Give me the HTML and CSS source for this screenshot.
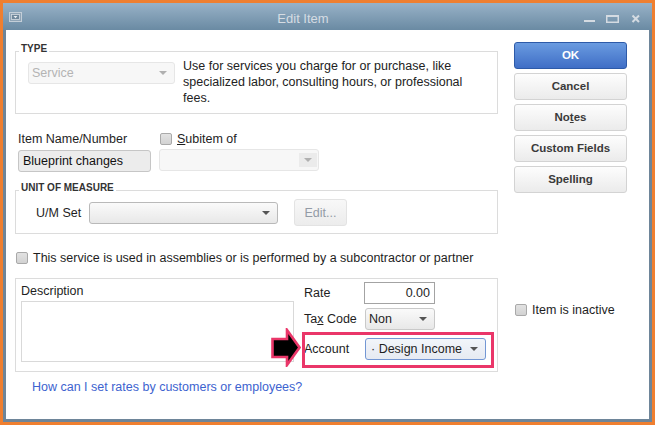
FILE: index.html
```html
<!DOCTYPE html>
<html>
<head>
<meta charset="utf-8">
<title>Edit Item</title>
<link rel="stylesheet" href="styles.css">
</head>
<body>
<div class="window">
  <div class="titlebar">
    <svg class="sysmenu" width="13" height="10" viewBox="0 0 13 10">
      <rect x="0.5" y="0.5" width="12" height="9" fill="#8fa4b6" stroke="#c3ced8"/>
      <rect x="2.5" y="2.5" width="8" height="5" fill="#6f879b" stroke="#d3dae1" stroke-width="0.8"/>
      <polygon points="4.5,4 8.5,4 6.5,6.2" fill="#e8edf1"/>
    </svg>
    <div class="title">Edit Item</div>
    <svg class="controls" width="56" height="27" viewBox="0 0 56 27">
      <rect x="0" y="17" width="11" height="2" fill="#d4dbe2"/>
      <rect x="22.75" y="12.75" width="11.5" height="6.5" fill="none" stroke="#d4dbe2" stroke-width="1.5"/>
      <rect x="22" y="12" width="13" height="2" fill="#d4dbe2"/>
      <path d="M48.5 12.5 L55 19 M55 12.5 L48.5 19" stroke="#d4dbe2" stroke-width="2"/>
    </svg>
  </div>
  <div class="client">
    <div class="main">
      <div class="group type-group">
        <div class="legend">TYPE</div>
        <div class="type-row">
          <div class="select disabled type-select"><span>Service</span><i class="arrow"></i></div>
          <p class="type-desc">Use for services you charge for or purchase, like specialized labor, consulting hours, or professional fees.</p>
        </div>
      </div>

      <div class="name-row">
        <div class="name-col">
          <div class="lbl">Item Name/Number</div>
          <div class="input name-input">Blueprint changes</div>
        </div>
        <div class="sub-col">
          <div class="check-line"><span class="checkbox"></span><span><u>S</u>ubitem of</span></div>
          <div class="select disabled sub-select"><span class="arrow-box"><i class="arrow"></i></span></div>
        </div>
      </div>

      <div class="group uom-group">
        <div class="legend">UNIT OF MEASURE</div>
        <div class="uom-row">
          <div class="uom-label">U/M Set</div>
          <div class="select uom-select"><i class="arrow"></i></div>
          <div class="edit-btn">Edit...</div>
        </div>
      </div>

      <div class="check-line assembly"><span class="checkbox"></span><span>This service is used in assemblies or is performed by a subcontractor or partner</span></div>

      <div class="group desc-group">
        <div class="desc-col">
          <div class="lbl">Description</div>
          <div class="textarea"></div>
        </div>
        <div class="fields">
          <div class="field rate-field">
            <div class="field-label">Rate</div>
            <div class="input rate-input">0.00</div>
          </div>
          <div class="field tax-field">
            <div class="field-label">Ta<u>x</u> Code</div>
            <div class="select tax-select"><span>Non</span><i class="arrow"></i></div>
          </div>
          <div class="field account-field">
            <div class="field-label">Account</div>
            <div class="select account-select"><span>· Design Income</span><i class="arrow"></i></div>
          </div>
        </div>
        <div class="highlight"></div>
        <svg class="pointer" width="30" height="39" viewBox="0 0 30 39">
          <polygon points="1.5,11 16,11 16,2 28.5,19.5 16,37 16,29 1.5,29" fill="#000" stroke="#ea3669" stroke-width="2.6" stroke-linejoin="miter"/>
        </svg>
      </div>

      <a class="help-link">How can I set rates by customers or employees?</a>
    </div>

    <div class="side">
      <div class="btn ok">OK</div>
      <div class="btn">Cancel</div>
      <div class="btn">No<u>t</u>es</div>
      <div class="btn">Custom Fields</div>
      <div class="btn">Spellin<u>g</u></div>
      <div class="check-line inactive"><span class="checkbox"></span><span>Item is inactive</span></div>
    </div>
  </div>
</div>
</body>
</html>
```

FILE: styles.css
```css
* {
  box-sizing: border-box;
  margin: 0;
  padding: 0;
}

html, body {
  width: 655px;
  height: 425px;
  overflow: hidden;
}

body {
  background: #ef7f30;
  font-family: "Liberation Sans", Arial, sans-serif;
  font-size: 12.5px;
  color: #1e1e1e;
  padding: 3px 3px 0 3px;
}

.window {
  width: 649px;
  height: 419px;
  background: #6e8599;
  display: flex;
  flex-direction: column;
}

.titlebar {
  height: 27px;
  flex: none;
  display: flex;
  align-items: center;
  padding: 0 12px 0 6px;
  background: linear-gradient(#98b2c7, #6a8aa3);
}

.sysmenu {
  flex: none;
  margin-top: 1px;
}

.title {
  flex: 1;
  text-align: center;
  color: #d5dce3;
  font-size: 13px;
  padding-top: 3px;
}

.controls {
  flex: none;
}

.client {
  flex: 1;
  margin: 0 3px 3px 3px;
  background: #fff;
  display: flex;
  padding-left: 9px;
}

.main {
  width: 483px;
  display: flex;
  flex-direction: column;
}

.group {
  border: 1px solid #dcdcdc;
  display: flex;
  flex-direction: column;
  align-items: flex-start;
}

.legend {
  height: 12px;
  line-height: 12px;
  margin: -9px 0 0 3px;
  padding: 0 2px;
  background: #fff;
  font-size: 10px;
  font-weight: bold;
  color: #333;
}

/* selects and inputs */
.select {
  display: flex;
  align-items: center;
  border: 1px solid #b9b9b9;
  border-radius: 3px;
  background: linear-gradient(#fafafa, #e8e8e8);
  padding: 0 7px 0 4px;
  color: #1e1e1e;
  white-space: nowrap;
}

.select.disabled {
  border-color: #e6e6e6;
  background: #f7f7f7;
  color: #b4b4b4;
}

.arrow {
  margin-left: auto;
  width: 0;
  height: 0;
  border-left: 4px solid transparent;
  border-right: 4px solid transparent;
  border-top: 4px solid #555;
}

.select.disabled .arrow {
  border-top-color: #b0b0b0;
}

.input {
  display: flex;
  align-items: center;
  padding: 0 4px;
  white-space: nowrap;
}

/* type */
.type-group {
  margin-top: 21px;
  height: 63px;
}

.type-row {
  display: flex;
  align-items: flex-start;
  margin: 7px 0 0 12px;
}

.type-select {
  width: 147px;
  height: 22px;
  padding-left: 3px;
}

.type-desc {
  width: 300px;
  margin: -4px 0 0 8px;
  line-height: 16px;
  color: #222;
}

/* name row */
.name-row {
  display: flex;
  margin-top: 17px;
}

.name-col {
  margin-left: 3px;
  width: 133px;
}

.lbl {
  height: 16px;
  line-height: 16px;
}

.name-input {
  margin-top: 3px;
  width: 133px;
  height: 22px;
  background: #ececec;
  border: 1px solid #c6c6c6;
  border-radius: 3px;
  color: #111;
}

.sub-col {
  margin-left: 8px;
}

.check-line {
  display: flex;
  align-items: center;
  height: 16px;
  line-height: 16px;
  gap: 5px;
}

.sub-col .check-line {
  margin-left: 1px;
}

.checkbox {
  flex: none;
  width: 12px;
  height: 12px;
  border: 1px solid #a9a9a9;
  border-radius: 2px;
  background: linear-gradient(#e2e2e2, #d2d2d2);
}

.sub-select {
  margin-top: 2px;
  width: 160px;
  height: 22px;
  padding: 0 1px 0 0;
}

.arrow-box {
  margin-left: auto;
  width: 18px;
  height: 14px;
  background: #ebebeb;
  display: flex;
  align-items: center;
  justify-content: center;
}

.arrow-box .arrow {
  margin-left: 0;
}

/* unit of measure */
.uom-group {
  margin-top: 18px;
  height: 44px;
}

.uom-row {
  display: flex;
  align-items: center;
  margin: 5px 0 0 20px;
}

.uom-label {
  width: 53px;
}

.uom-select {
  width: 189px;
  height: 22px;
}

.edit-btn {
  margin-left: 16px;
  width: 53px;
  height: 27px;
  border: 1px solid #e3e3e3;
  border-radius: 3px;
  background: linear-gradient(#f8f8f8, #ececec);
  color: #939ba6;
  display: flex;
  align-items: center;
  justify-content: center;
}

/* assembly */
.assembly {
  margin: 16px 0 0 1px;
  color: #1e1e1e;
}

/* description group */
.desc-group {
  position: relative;
  margin-top: 12px;
  height: 94px;
  flex-direction: row;
  padding-left: 5px;
}

.desc-col {
  width: 273px;
  margin-top: 4px;
}

.textarea {
  margin-top: 2px;
  width: 273px;
  height: 61px;
  border: 1px solid #d9d9d9;
  background: #fff;
}

.fields {
  margin: 3px 0 0 10px;
  display: flex;
  flex-direction: column;
}

.field {
  display: flex;
  align-items: center;
  height: 22px;
}

.tax-field {
  margin-top: 4px;
}

.account-field {
  margin-top: 8px;
}

.field-label {
  width: 60px;
}

.rate-input {
  width: 71px;
  height: 22px;
  border: 1px solid #a3a3a3;
  background: #fff;
  justify-content: flex-end;
}

.tax-select {
  margin-left: 1px;
  width: 70px;
  height: 22px;
  padding-left: 3px;
  border-color: #c9c9c9;
}

.account-select {
  margin-left: 1px;
  width: 121px;
  height: 22px;
  padding-left: 5px;
  border-color: #7397d4;
  background: linear-gradient(#f2f5fa, #e6eaf2);
}

.highlight {
  position: absolute;
  left: 286px;
  top: 53px;
  width: 192px;
  height: 36px;
  border: 3px solid #ea3669;
}

.pointer {
  position: absolute;
  left: 255px;
  top: 49px;
}

/* link */
.help-link {
  display: block;
  margin: 7px 0 0 17px;
  line-height: 16px;
  color: #3d63cf;
  cursor: pointer;
}

/* side buttons */
.side {
  margin-left: 16px;
  width: 113px;
  display: flex;
  flex-direction: column;
  padding-top: 12px;
}

.btn {
  height: 27px;
  line-height: 25px;
  text-align: center;
  border: 1px solid #d3d3d3;
  border-radius: 3px;
  background: linear-gradient(#fdfdfd, #ebebeb);
  font-weight: bold;
  font-size: 11.5px;
  color: #3a3a3a;
}

.btn + .btn {
  margin-top: 4px;
}

.btn.ok {
  background: linear-gradient(#6a9be0, #3f6ec6);
  border-color: #2d5aa8;
  color: #fff;
}

.inactive {
  margin: 109px 0 0 1px;
}
```
